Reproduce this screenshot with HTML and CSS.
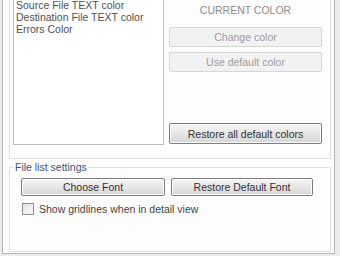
FILE: index.html
```html
<!DOCTYPE html>
<html lang="en">
<head>
    <meta charset="UTF-8">
    <title>Options - Colors</title>
    <link rel="stylesheet" href="styles.css">
</head>
<body>

<div class="tab">
    <div class="group colors">
        <div class="listbox">
            <div class="item">Source File TEXT color</div>
            <div class="item">Destination File TEXT color</div>
            <div class="item">Errors Color</div>
        </div>
        <div class="color-side">
            <div class="current">CURRENT COLOR</div>
            <button class="btn" disabled>Change color</button>
            <button class="btn second" disabled>Use default color</button>
            <button class="btn restore-all">Restore all default colors</button>
        </div>
    </div>

    <fieldset class="filelist">
        <legend>File list settings</legend>
        <div class="filelist-body">
            <div class="font-row">
                <button class="btn choose">Choose Font</button>
                <button class="btn restore-font">Restore Default Font</button>
            </div>
            <label class="check-row">
                <span class="checkbox"></span>
                Show gridlines when in detail view
            </label>
        </div>
    </fieldset>
</div>

</body>
</html>
```

FILE: styles.css
```css
body {
    margin: 0;
    background-color: #ececec;
    font-family: "Liberation Sans", Arial, sans-serif;
    font-size: 10.5px;
    color: #444;
    overflow: hidden;
}

.tab {
    margin-top: -14px;
    margin-left: 2px;
    width: 333px;
    box-sizing: border-box;
    background-color: #fdfdfd;
    border: 1px solid #b4b4b4;
    padding: 3px 3px 1px 6px;
}

.group {
    border: 1px solid #dde0e3;
}
.colors {
    display: flex;
    gap: 5px;
    padding: 3px 8px 13px 3px;
}

.listbox {
    width: 151px;
    height: 151px;
    box-sizing: border-box;
    border: 1px solid #bcbcbc;
    background-color: #fff;
    padding: 4px 0 0 2px;
}
.listbox .item {
    line-height: 12px;
    height: 12px;
    color: #505050;
}

.color-side {
    width: 153px;
    display: flex;
    flex-direction: column;
}
.current {
    margin-top: 11px;
    line-height: 10px;
    text-align: center;
    color: #8c8c8c;
}

.btn {
    font-family: inherit;
    font-size: 10.5px;
    padding: 0;
    border-radius: 2px;
    color: #333;
    border: 1px solid #7d7d7d;
    background: linear-gradient(#f6f6f6, #e6e6e6 50%, #d6d6d8);
    box-shadow: inset 0 0 0 1px #fcfcfc;
}
.btn:disabled {
    color: #9c9c9c;
    border-color: #d6d6d6;
    background: #f2f2f2;
    box-shadow: none;
}

.color-side .btn {
    height: 20px;
}
.color-side .btn:first-of-type {
    margin-top: 12px;
}
.color-side .second {
    margin-top: 5px;
}
.color-side .restore-all {
    margin-top: auto;
    margin-bottom: 1px;
    height: 21px;
}

.filelist {
    margin: 3px 0 0 0;
    padding: 0;
    border: 1px solid #dde0e3;
}
.filelist legend {
    margin-left: 4px;
    padding: 0 1px;
    line-height: 10px;
    color: #3b5580;
}
.filelist-body {
    padding: 6px 0 36px 11px;
}

.font-row {
    display: flex;
    gap: 6px;
}
.font-row .btn {
    height: 18px;
}
.choose {
    width: 144px;
}
.restore-font {
    width: 142px;
}

.check-row {
    margin-top: 7px;
    margin-left: 1px;
    display: flex;
    align-items: center;
    gap: 5px;
    line-height: 12px;
    color: #444;
}
.checkbox {
    width: 12px;
    height: 12px;
    box-sizing: border-box;
    border: 1px solid #8f8f8f;
    background: linear-gradient(135deg, #e4e4e4, #fafafa);
}
```
